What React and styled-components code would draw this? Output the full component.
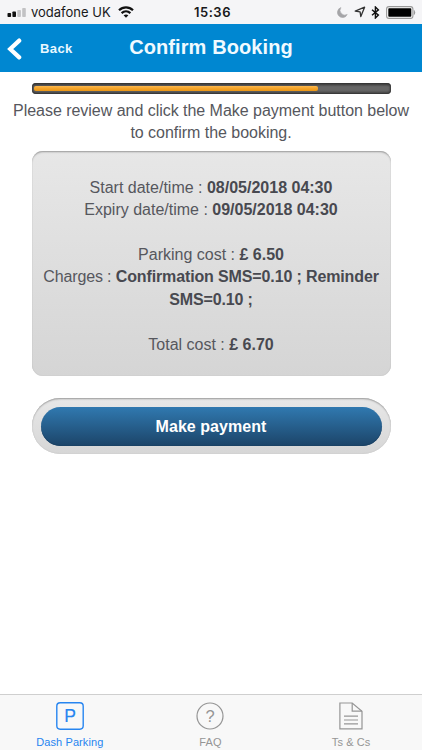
import React from 'react'
import styled, { createGlobalStyle } from 'styled-components'

const GlobalStyle = createGlobalStyle`
  * {
    box-sizing: border-box;
  }

  body {
    margin: 0;
    background: #fff;
    font-family: "Liberation Sans", Arial, sans-serif;
    color: #56575d;
  }
`

const Screen = styled.div`
  display: flex;
  flex-direction: column;
  height: 750px;
  overflow: hidden;
`

const StatusBar = styled.div`
  display: grid;
  grid-template-columns: 1fr auto 1fr;
  align-items: center;
  height: 24px;
  padding: 0 6px 0 7px;
  background: #f5f5f7;
  color: #18181a;
`

const Carrier = styled.div`
  display: flex;
  align-items: center;
  font-family: Inter, sans-serif;
  font-size: 13px;
  white-space: nowrap;

  svg:first-child {
    margin-right: 5px;
  }

  svg:last-child {
    margin-left: 7px;
  }
`

const Clock = styled.div`
  padding-left: 2px;
  font-family: Inter, sans-serif;
  font-size: 13px;
  font-weight: 600;
  letter-spacing: 0.5px;
`

const StatusIcons = styled.div`
  display: flex;
  align-items: center;
  justify-content: flex-end;
`

const Header = styled.header`
  display: grid;
  grid-template-columns: 1fr auto 1fr;
  align-items: center;
  height: 48px;
  background: #0087d1;
  color: #fff;
`

const BackButton = styled.button`
  display: flex;
  align-items: center;
  gap: 18px;
  padding: 1px 0 0 7px;
  border: 0;
  background: none;
  color: #e9f8ff;
  font: bold 13px "Liberation Sans", Arial, sans-serif;
  letter-spacing: 0.4px;
`

const Title = styled.h1`
  margin: 0 0 2px;
  font-size: 20px;
  line-height: 24px;
  letter-spacing: 0.1px;
  color: #f0faff;
`

const Content = styled.main`
  flex: 1;
  padding: 11px 0 0;
`

const Track = styled.div`
  height: 11px;
  margin: 0 31px 0 32px;
  padding: 3px 2px 2px;
  border-radius: 4px;
  background: linear-gradient(#3a3a3a, #666 35%, #666 65%, #4c4c4c);
  box-shadow: inset 0 0 2px 1px #333;
`

const Fill = styled.div`
  height: 5px;
  border-radius: 2px;
  background: linear-gradient(#fbb850, #f5a52a 45%, #e99616);
`

const Intro = styled.p`
  margin: 6px 0 6px;
  font-size: 16px;
  line-height: 22.4px;
  letter-spacing: -0.03px;
  text-align: center;
`

const Summary = styled.section`
  height: 225px;
  margin: 0 31px 0 32px;
  padding: 26px 1px 0 0;
  border-radius: 11px;
  background: linear-gradient(#e7e7e7, #d5d5d5);
  box-shadow: inset 0 2px 2px -1px #999, inset 0 0 1px #aaa;
  font-size: 16px;
  line-height: 22.4px;
  text-align: center;
`

const Line = styled.div`
  margin-bottom: ${(props) => (props.$spaced ? '22.4px' : '0')};
  letter-spacing: ${(props) => (props.$tight ? '-0.13px' : '0')};

  strong {
    color: #484950;
  }
`

const ButtonFrame = styled.div`
  height: 56px;
  margin: 22px 31px 0 32px;
  padding: 9px 9px 8px;
  border-radius: 28px;
  background: linear-gradient(#e8e8e8, #d6d6d6);
  box-shadow: inset 0 2px 2px -1px #999, inset 0 0 1px #aaa;
`

const PayButton = styled.button`
  display: block;
  width: 100%;
  height: 39px;
  padding: 2px 1px 0 0;
  border: 0;
  border-radius: 20px;
  background: linear-gradient(#3079b0, #1c4468);
  box-shadow: inset 0 -1px #1a4265;
  color: #fff;
  font: bold 16px "Liberation Sans", Arial, sans-serif;
  letter-spacing: 0.05px;
`

const TabBar = styled.nav`
  display: grid;
  grid-template-columns: repeat(3, 1fr);
  height: 56px;
  border-top: 1px solid #cfcfcf;
  background: #f8f8f8;
`

const Tab = styled.a`
  display: flex;
  flex-direction: column;
  align-items: center;
  gap: 6px;
  padding: 7px 1px 0 0;
  color: ${(props) => (props.$active ? '#2785f0' : '#959595')};
  font-size: 11px;
  line-height: 13px;
  letter-spacing: 0.1px;

  svg {
    flex: none;
    letter-spacing: 0;
  }
`

const SignalIcon = () => (
  <svg width="19" height="9" viewBox="0 0 19 9">
    <rect x="0.5" y="5" width="3.6" height="4" rx="0.8" fill="#111" />
    <rect x="5.4" y="3.5" width="3.6" height="5.5" rx="0.8" fill="#111" />
    <rect x="10.3" y="2" width="3.6" height="7" rx="0.8" fill="#c2c2c4" />
    <rect x="15.2" y="0" width="3.6" height="9" rx="0.8" fill="#c2c2c4" />
  </svg>
)

const WifiIcon = () => (
  <svg width="16" height="12" viewBox="0 0 16 12" fill="none" stroke="#111" strokeWidth="2.2">
    <path d="M1 4.3C5 0.4 11 0.4 15 4.3" />
    <path d="M3.6 7.1C6.2 4.7 9.8 4.7 12.4 7.1" />
    <path d="M8 11.8L5.6 9.3C7 8.1 9 8.1 10.4 9.3Z" fill="#111" stroke="none" />
  </svg>
)

const MoonIcon = () => (
  <svg width="11" height="11" viewBox="0 0 11 11">
    <path d="M3.9 0.6A5.1 5.1 0 1 0 10.2 7.5A4.8 4.8 0 0 1 3.9 0.6Z" fill="#a5a5a8" stroke="#a5a5a8" strokeWidth="0.6" />
  </svg>
)

const LocationIcon = () => (
  <svg width="12" height="12" viewBox="0 0 12 12" style={{ marginLeft: 6 }}>
    <path d="M1.2 5.2L10.6 1.2L6.8 10.6L6.1 5.8Z" fill="none" stroke="#333" strokeWidth="1.3" strokeLinejoin="round" />
  </svg>
)

const BluetoothIcon = () => (
  <svg width="9" height="13" viewBox="0 0 9 13" style={{ marginLeft: 5 }}>
    <path d="M1 3.7L7.4 9.1L4.4 12V1L7.4 3.9L1 9.3" fill="none" stroke="#111" strokeWidth="1.4" />
  </svg>
)

const BatteryIcon = () => (
  <svg width="30" height="13" viewBox="0 0 30 13" style={{ marginLeft: 6 }}>
    <rect x="0.6" y="0.6" width="26.3" height="11.8" rx="2.4" fill="#fafafa" stroke="#999" strokeWidth="1.1" />
    <rect x="2.3" y="2.2" width="23" height="8.6" rx="0.8" fill="#000" />
    <path d="M28.2 4.4Q29.6 6.5 28.2 8.6Z" fill="#888" stroke="#888" strokeWidth="0.5" />
  </svg>
)

const ChevronIcon = () => (
  <svg width="15" height="22" viewBox="0 0 15 22">
    <path d="M12.2 2.6L3.2 11L12.2 19.4" fill="none" stroke="#fff" strokeWidth="4.2" strokeLinecap="round" />
  </svg>
)

const ParkingIcon = () => (
  <svg width="28" height="28" viewBox="0 0 28 28">
    <rect x="0.8" y="0.8" width="26.4" height="26.4" rx="3.4" fill="none" stroke="currentColor" strokeWidth="1.4" />
    <text x="14.2" y="19.6" textAnchor="middle" fontSize="17.5" fill="currentColor" stroke="currentColor" strokeWidth="0.2">P</text>
  </svg>
)

const FaqIcon = () => (
  <svg width="28" height="28" viewBox="0 0 28 28">
    <circle cx="14" cy="14" r="13" fill="none" stroke="currentColor" strokeWidth="1.2" />
    <text x="14" y="19.5" textAnchor="middle" fontSize="16.5" fill="currentColor">?</text>
  </svg>
)

const TermsIcon = () => (
  <svg width="24" height="28" viewBox="0 0 24 28" fill="none" stroke="currentColor" strokeWidth="1.2">
    <path d="M0.9 1H13.2L23 9.2V26.8H0.9Z" />
    <path d="M13.2 1V9.2H23" />
    <path d="M5 14.2H19M5 18H19M5 21.8H19" />
  </svg>
)

const App = () => {
  return (
    <Screen>
      <GlobalStyle />
      <StatusBar>
        <Carrier>
          <SignalIcon />
          vodafone UK
          <WifiIcon />
        </Carrier>
        <Clock>15:36</Clock>
        <StatusIcons>
          <MoonIcon />
          <LocationIcon />
          <BluetoothIcon />
          <BatteryIcon />
        </StatusIcons>
      </StatusBar>

      <Header>
        <BackButton>
          <ChevronIcon />
          Back
        </BackButton>
        <Title>Confirm Booking</Title>
      </Header>

      <Content>
        <Track>
          <Fill style={{ width: '80%' }} />
        </Track>
        <Intro>
          Please review and click the Make payment button below
          <br />
          to confirm the booking.
        </Intro>
        <Summary>
          <Line>Start date/time : <strong>08/05/2018 04:30</strong></Line>
          <Line $spaced>Expiry date/time : <strong>09/05/2018 04:30</strong></Line>
          <Line>Parking cost : <strong>£ 6.50</strong></Line>
          <Line $spaced $tight>
            Charges : <strong>Confirmation SMS=0.10 ; Reminder<br />SMS=0.10 ;</strong>
          </Line>
          <Line>Total cost : <strong>£ 6.70</strong></Line>
        </Summary>
        <ButtonFrame>
          <PayButton>Make payment</PayButton>
        </ButtonFrame>
      </Content>

      <TabBar>
        <Tab $active>
          <ParkingIcon />
          Dash Parking
        </Tab>
        <Tab>
          <FaqIcon />
          FAQ
        </Tab>
        <Tab>
          <TermsIcon />
          Ts &amp; Cs
        </Tab>
      </TabBar>
    </Screen>
  )
}

export default App
